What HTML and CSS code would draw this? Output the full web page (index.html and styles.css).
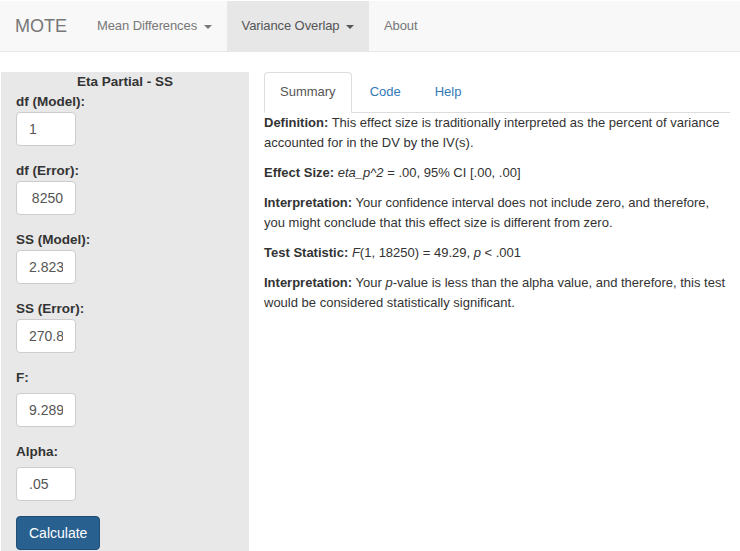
FILE: index.html
```html
<!DOCTYPE html>
<html>
<head>
<meta charset="utf-8">
<title>MOTE</title>
<link rel="stylesheet" href="styles.css">
</head>
<body>
<nav class="navbar">
  <span class="brand">MOTE</span>
  <ul class="nav">
    <li><a>Mean Differences <span class="caret"></span></a></li>
    <li class="active"><a>Variance Overlap <span class="caret"></span></a></li>
    <li><a>About</a></li>
  </ul>
</nav>
<div class="page">
  <aside class="sidebar">
    <div class="title">Eta Partial - SS</div>
    <div class="group">
      <label>df (Model):</label>
      <input class="field" type="text" value="1">
    </div>
    <div class="group">
      <label>df (Error):</label>
      <input class="field end" type="text" value="8250">
    </div>
    <div class="group">
      <label>SS (Model):</label>
      <input class="field end" type="text" value="2.823">
    </div>
    <div class="group">
      <label>SS (Error):</label>
      <input class="field end" type="text" value="270.8">
    </div>
    <div class="group">
      <label class="spaced">F:</label>
      <input class="field end" type="text" value="9.289">
    </div>
    <div class="group">
      <label class="spaced">Alpha:</label>
      <input class="field" type="text" value=".05">
    </div>
    <button class="btn">Calculate</button>
  </aside>
  <main class="main">
    <ul class="tabs">
      <li class="active"><a>Summary</a></li>
      <li><a>Code</a></li>
      <li><a>Help</a></li>
    </ul>
    <div class="content">
      <p><b>Definition:</b> This effect size is traditionally interpreted as the percent of variance accounted for in the DV by the IV(s).</p>
      <p><b>Effect Size:</b> <i>eta_p^2</i> = .00, 95% CI [.00, .00]</p>
      <p><b>Interpretation:</b> Your confidence interval does not include zero, and therefore, you might conclude that this effect size is different from zero.</p>
      <p><b>Test Statistic:</b> <i>F</i>(1, 18250) = 49.29, <i>p</i> &lt; .001</p>
      <p><b>Interpretation:</b> Your <i>p</i>-value is less than the alpha value, and therefore, this test would be considered statistically significant.</p>
    </div>
  </main>
</div>
</body>
</html>
```
FILE: styles.css
```css
* { box-sizing: border-box; }
html, body {
  margin: 0;
  padding: 0;
  background: #fff;
  font-family: "Liberation Sans", Arial, sans-serif;
  font-size: 13px;
  line-height: 20px;
  color: #333;
}
.navbar {
  margin-top: 1px;
  height: 51px;
  background: #f8f8f8;
  border-bottom: 1px solid #e7e7e7;
  display: flex;
  align-items: stretch;
}
.brand {
  padding: 15px;
  font-size: 18px;
  line-height: 20px;
  color: #777;
}
.nav {
  list-style: none;
  margin: 0;
  padding: 0;
  display: flex;
}
.nav li a {
  display: block;
  padding: 15px;
  line-height: 20px;
  height: 50px;
  color: #777;
  letter-spacing: -0.1px;
}
.nav li.active a {
  background: #e7e7e7;
  color: #555;
}
.caret {
  display: inline-block;
  width: 0;
  height: 0;
  margin-left: 3px;
  vertical-align: middle;
  border-top: 4px solid;
  border-right: 4px solid transparent;
  border-left: 4px solid transparent;
}
.page {
  display: flex;
  margin-top: 20px;
  padding-left: 1px;
  padding-right: 10px;
  gap: 15px;
}
.sidebar {
  width: 248px;
  flex: none;
  background: #e8e8e8;
  padding: 0 15px 30px;
}
.title {
  text-align: center;
  font-weight: bold;
  font-size: 13.5px;
}
.group {
  display: flex;
  flex-direction: column;
  align-items: flex-start;
  margin-bottom: 15px;
}
label {
  font-weight: bold;
  font-size: 13.5px;
  line-height: 20px;
}
label.spaced { margin-bottom: 5px; }
.field {
  width: 60px;
  height: 34px;
  padding: 6px 12px;
  border: 1px solid #ccc;
  border-radius: 4px;
  background: #fff;
  font-family: "Liberation Sans", Arial, sans-serif;
  font-size: 14px;
  color: #555;
  outline: none;
}
.field.end { text-align: right; }
.btn {
  display: block;
  height: 34px;
  padding: 6px 12px;
  background: #286090;
  border: 1px solid #204d74;
  border-radius: 4px;
  color: #fff;
  font-family: "Liberation Sans", Arial, sans-serif;
  font-size: 14px;
  line-height: 20px;
}
.main {
  flex: 1;
  min-width: 0;
}
.tabs {
  list-style: none;
  margin: 0;
  padding: 0;
  display: flex;
  border-bottom: 1px solid #ddd;
}
.tabs li {
  margin-bottom: -1px;
  margin-right: 2px;
}
.tabs li a {
  display: block;
  padding: 9px 15px 10px;
  line-height: 20px;
  border: 1px solid transparent;
  border-radius: 4px 4px 0 0;
  color: #337ab7;
}
.tabs li.active a {
  color: #555;
  background: #fff;
  border-color: #ddd #ddd transparent;
}
.content p {
  margin: 0 0 10px;
}
```
